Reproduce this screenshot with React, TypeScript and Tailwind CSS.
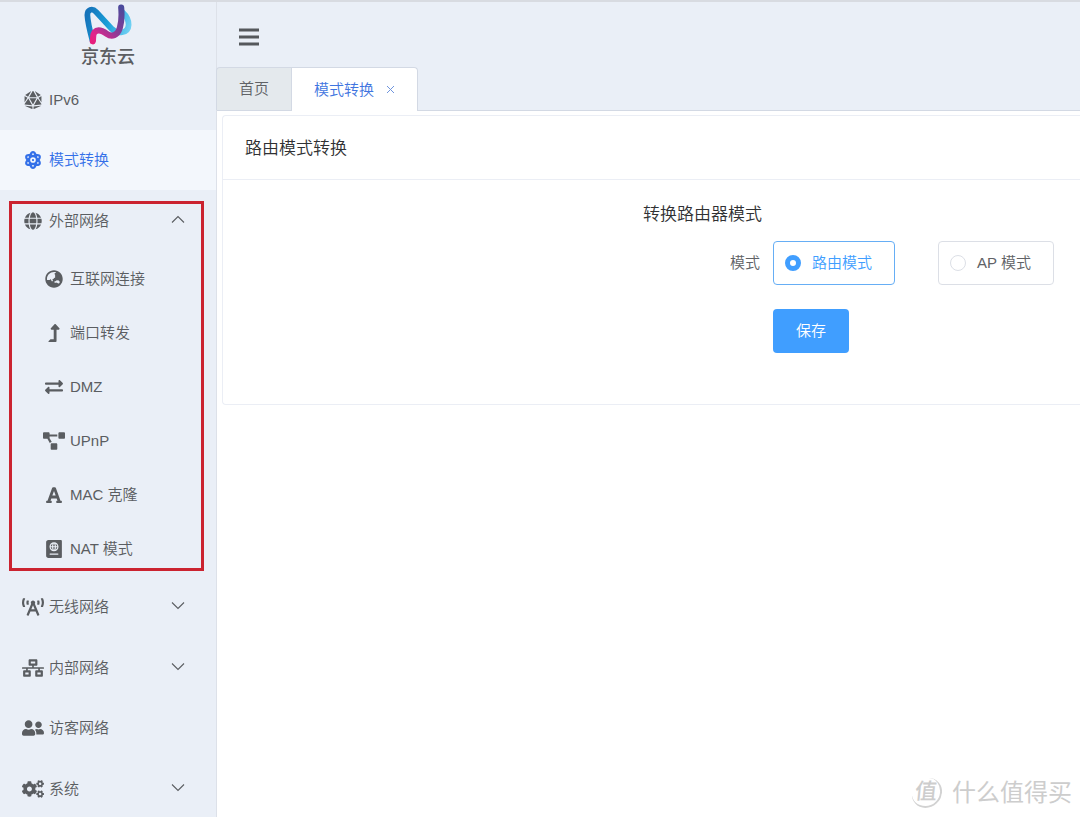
import { useState } from "react";
import type { IconType } from "react-icons";
import {
  FaAtom,
  FaBroadcastTower,
  FaCogs,
  FaDiceD20,
  FaExchangeAlt,
  FaFont,
  FaGlobe,
  FaGlobeAsia,
  FaLevelUpAlt,
  FaNetworkWired,
  FaPassport,
  FaProjectDiagram,
  FaUserFriends,
} from "react-icons/fa";

type Item = { label: string; icon: IconType };

const externalItems: Item[] = [
  { label: "互联网连接", icon: FaGlobeAsia },
  { label: "端口转发", icon: FaLevelUpAlt },
  { label: "DMZ", icon: FaExchangeAlt },
  { label: "UPnP", icon: FaProjectDiagram },
  { label: "MAC 克隆", icon: FaFont },
  { label: "NAT 模式", icon: FaPassport },
];

function Chevron({ open = false }: { open?: boolean }) {
  return (
    <svg viewBox="0 0 14 12" className="ml-auto h-3 w-3.5" fill="none" stroke="currentColor" strokeWidth="1.1" aria-hidden="true">
      <path d={open ? "M1 7.5l6-6 6 6" : "M1 1.5l6 6 6-6"} />
    </svg>
  );
}

function NavLink({ label, icon: Icon, active = false }: Item & { active?: boolean }) {
  return (
    <a
      href="#"
      className={`flex h-15 items-center gap-[5px] pl-[22px] ${active ? "bg-[#f3f7fc] text-[#3370e8]" : ""}`}
    >
      <Icon className="h-[18px] w-[22px]" />
      {label}
    </a>
  );
}

function NavGroup({ label, icon: Icon, open = false }: Item & { open?: boolean }) {
  return (
    <button
      type="button"
      aria-expanded={open}
      className={`flex w-full items-center gap-[5px] pr-[31px] pl-[22px] ${open ? "h-[62px]" : "h-[61px]"}`}
    >
      <Icon className="h-[18px] w-[22px]" />
      {label}
      <Chevron open={open} />
    </button>
  );
}

function Logo() {
  return (
    <div className="flex h-[70px] flex-col items-center pt-1 text-[#5c5e62]">
      <svg viewBox="72 11 142 120" className="h-[41px] w-12" fill="none" strokeLinecap="round" strokeLinejoin="round" aria-hidden="true">
        <defs>
          <linearGradient id="blue" gradientUnits="userSpaceOnUse" x1="80" y1="40" x2="208" y2="80">
            <stop offset="0" stopColor="#1673ba" />
            <stop offset="0.5" stopColor="#189fd8" />
            <stop offset="1" stopColor="#6fd0f3" />
          </linearGradient>
          <linearGradient id="pink" gradientUnits="userSpaceOnUse" x1="182" y1="20" x2="98" y2="122">
            <stop offset="0" stopColor="#4b4a9c" />
            <stop offset="0.5" stopColor="#8b3c96" />
            <stop offset="0.85" stopColor="#e3238b" />
            <stop offset="1" stopColor="#e6207e" />
          </linearGradient>
        </defs>
        <path d="M97 118C90 92 83 62 82 43C82 27 96 21 108 34L153 83C170 101 203 98 204 72C204 57 197 45 187 36" stroke="url(#blue)" strokeWidth="17" />
        <path d="M182 21C184 43 183 64 178 81C171 104 154 109 140 99C129 91 114 82 103 94C97 102 100 112 98 121" stroke="url(#pink)" strokeWidth="18" />
      </svg>
      <span className="text-lg leading-6 font-medium">京东云</span>
    </div>
  );
}

function Sidebar() {
  return (
    <aside className="w-[217px] shrink-0 border-r border-[#dde1e9]">
      <Logo />
      <nav aria-label="主菜单">
        <NavLink label="IPv6" icon={FaDiceD20} />
        <NavLink label="模式转换" icon={FaAtom} active />
        <div className="relative">
          <NavGroup label="外部网络" icon={FaGlobe} open />
          {externalItems.map(({ label, icon: Icon }) => (
            <a key={label} href="#" className="flex h-[54px] items-center gap-[5px] pl-[43px]">
              <Icon className="h-[18px] w-[22px]" />
              {label}
            </a>
          ))}
          <div className="pointer-events-none absolute top-[11px] right-3 bottom-[5px] left-[9px] border-3 border-[#cb2330]" />
        </div>
        <NavGroup label="无线网络" icon={FaBroadcastTower} />
        <NavGroup label="内部网络" icon={FaNetworkWired} />
        <NavLink label="访客网络" icon={FaUserFriends} />
        <NavGroup label="系统" icon={FaCogs} />
      </nav>
    </aside>
  );
}

function TabBar() {
  return (
    <div className="flex h-11 border-b border-[#d3d9e4] text-[#606266]">
      <button type="button" className="-ml-px rounded-tl border-t border-l border-[#d3d9e4] bg-[#e4e9ed] px-[22px]">
        首页
      </button>
      <div className="-mb-px flex items-center gap-3 rounded-tr border border-b-0 border-[#d3d9e4] bg-white px-[22px] text-[#3f75e0]">
        <button type="button">模式转换</button>
        <button type="button" aria-label="关闭">
          <svg viewBox="0 0 9 9" className="size-[9px]" stroke="#6f95dd" aria-hidden="true">
            <path d="M1 1l7 7M8 1l-7 7" />
          </svg>
        </button>
      </div>
    </div>
  );
}

function ModeOption({ label, checked, onSelect }: { label: string; checked: boolean; onSelect: () => void }) {
  return (
    <label
      className={`flex h-11 items-center gap-[11px] rounded border pr-[22px] pl-[11px] ${
        checked ? "border-[#66aef5] text-[#409eff]" : "border-[#dcdfe6] text-[#606266]"
      }`}
    >
      <input
        type="radio"
        name="mode"
        checked={checked}
        onChange={onSelect}
        className="size-4 appearance-none rounded-full border border-[#dcdfe6] bg-white checked:border-[5px] checked:border-[#409eff]"
      />
      {label}
    </label>
  );
}

function ModeCard() {
  const [mode, setMode] = useState("router");
  return (
    <section className="mt-1 ml-[5px] h-[290px] rounded-l border border-r-0 border-[#ebeef5]">
      <h1 className="flex h-16 items-center border-b border-[#ebeef5] pt-0.5 pl-[22px] text-[17px] text-[#303133]">路由模式转换</h1>
      <form className="pt-[23px] pl-[420px]" onSubmit={(e) => e.preventDefault()}>
        <h2 className="text-[17px] leading-6 text-[#303133]">转换路由器模式</h2>
        <div className="mt-3.5 flex items-center pl-[87px] whitespace-nowrap" role="radiogroup" aria-labelledby="mode-label">
          <span id="mode-label" className="mr-[13px] text-[#606266]">模式</span>
          <ModeOption label="路由模式" checked={mode === "router"} onSelect={() => setMode("router")} />
          <div className="w-[43px] shrink-0" />
          <ModeOption label="AP 模式" checked={mode === "ap"} onSelect={() => setMode("ap")} />
        </div>
        <button type="submit" className="mt-6 ml-[130px] h-11 rounded bg-[#409eff] px-[23px] text-white">
          保存
        </button>
      </form>
    </section>
  );
}

function Watermark() {
  return (
    <div className="pointer-events-none absolute right-2 bottom-2 flex items-center gap-2.5 text-[#cdcdcd]">
      <span className="flex size-[30px] items-center justify-center rounded-full border-r-2 border-b-2 border-[#d2d2d2] text-[22px] leading-7 font-medium -skew-x-6">
        值
      </span>
      <span className="text-2xl leading-8 font-normal">什么值得买</span>
    </div>
  );
}

export default function App() {
  return (
    <div className="relative flex h-screen overflow-hidden border-t-2 border-[#d8dbe1] bg-[#eaeff7] font-['Liberation_Sans','Noto_Sans_CJK_SC',sans-serif] text-[15px] leading-6 font-[350] text-[#5a5d61]">
      <div className="-mt-0.5 flex min-w-0 flex-1">
        <Sidebar />
        <div className="flex min-w-0 flex-1 flex-col">
          <header className="flex h-[67px] shrink-0 items-center pt-1.5 pl-[22px]">
            <button type="button" aria-label="菜单">
              <svg viewBox="0 0 20 18" className="h-[18px] w-5" stroke="#55585c" strokeWidth="3" aria-hidden="true">
                <path d="M0 2h20M0 9h20M0 16h20" />
              </svg>
            </button>
          </header>
          <TabBar />
          <main className="min-h-0 flex-1 overflow-hidden bg-white">
            <ModeCard />
          </main>
        </div>
      </div>
      <Watermark />
    </div>
  );
}
